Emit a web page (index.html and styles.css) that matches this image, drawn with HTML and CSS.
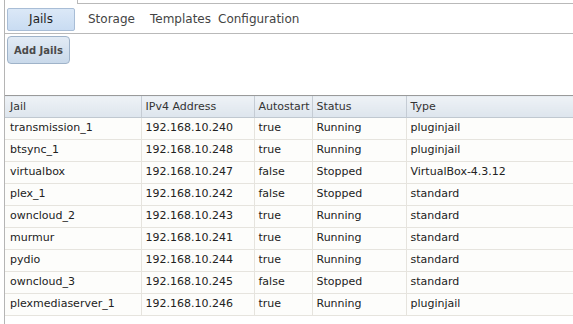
FILE: index.html
```html
<!DOCTYPE html>
<html lang="en">
<head>
    <meta charset="UTF-8">
    <title>Jails</title>
    <link rel="stylesheet" href="styles.css">
</head>
<body>
    <div class="panel">
        <div class="tabbar">
            <button class="tab active">Jails</button>
            <span class="tab tab-storage">Storage</span>
            <span class="tab tab-templates">Templates</span>
            <span class="tab">Configuration</span>
        </div>
        <div class="toolbar">
            <button class="add-button">Add Jails</button>
        </div>
        <table class="grid">
            <thead>
                <tr>
                    <th class="col-jail">Jail</th>
                    <th class="col-ip">IPv4 Address</th>
                    <th class="col-auto">Autostart</th>
                    <th class="col-status">Status</th>
                    <th class="col-type">Type</th>
                </tr>
            </thead>
            <tbody>
                <tr><td>transmission_1</td><td>192.168.10.240</td><td>true</td><td>Running</td><td>pluginjail</td></tr>
                <tr><td>btsync_1</td><td>192.168.10.248</td><td>true</td><td>Running</td><td>pluginjail</td></tr>
                <tr><td>virtualbox</td><td>192.168.10.247</td><td>false</td><td>Stopped</td><td>VirtualBox-4.3.12</td></tr>
                <tr><td>plex_1</td><td>192.168.10.242</td><td>false</td><td>Stopped</td><td>standard</td></tr>
                <tr><td>owncloud_2</td><td>192.168.10.243</td><td>true</td><td>Running</td><td>standard</td></tr>
                <tr><td>murmur</td><td>192.168.10.241</td><td>true</td><td>Running</td><td>standard</td></tr>
                <tr><td>pydio</td><td>192.168.10.244</td><td>true</td><td>Running</td><td>standard</td></tr>
                <tr><td>owncloud_3</td><td>192.168.10.245</td><td>false</td><td>Stopped</td><td>standard</td></tr>
                <tr><td>plexmediaserver_1</td><td>192.168.10.246</td><td>true</td><td>Running</td><td>pluginjail</td></tr>
            </tbody>
        </table>
    </div>
</body>
</html>
```

FILE: styles.css
```css
body {
    margin: 0;
    background-color: #fff;
    font-family: "DejaVu Sans", Verdana, sans-serif;
    font-size: 11px;
    color: #222;
}
.panel {
    margin-left: 4px;
    height: 324px;
    border-left: 1px solid #b5b5b5;
}
.tabbar {
    position: relative;
    display: flex;
    align-items: center;
    box-sizing: border-box;
    height: 34px;
    padding: 5px 0 0 2px;
    border-bottom: 1px solid #b9b9b9;
}
.tabbar::before {
    content: "";
    position: absolute;
    left: 72px;
    right: 0;
    top: 0;
    height: 3px;
    border-left: 1px solid #b9b9b9;
    border-bottom: 1px solid #b9b9b9;
}
.tab {
    font-family: inherit;
    font-size: 12px;
    color: #444;
}
.tab-storage {
    width: 62px;
}
.tab-templates {
    width: 68px;
}
.tab.active {
    box-sizing: border-box;
    width: 68px;
    height: 23px;
    margin: 0 13px 0 0;
    padding: 0;
    color: #1e1e1e;
    background: linear-gradient(#dbe8f7, #c9dcf2);
    border: 1px solid #a8bdd6;
    border-radius: 2px;
}
.toolbar {
    height: 59px;
    padding: 2px 0 0 2px;
}
.add-button {
    width: 63px;
    height: 28px;
    padding: 0;
    font-family: inherit;
    font-size: 10px;
    font-weight: bold;
    color: #4a4a4a;
    background: linear-gradient(#e2ebf5, #c9d9ea);
    border: 1px solid #9fb3c9;
    border-radius: 4px;
}
.grid {
    width: 568px;
    border-collapse: collapse;
    table-layout: fixed;
}
.grid th,
.grid td {
    box-sizing: border-box;
    height: 22px;
    padding: 0 0 1px 4px;
    text-align: left;
    white-space: nowrap;
    overflow: hidden;
}
.grid th {
    font-weight: normal;
    color: #333;
    background: linear-gradient(#eef2f6, #dde5ed);
    border-top: 1px solid #9a9a9a;
    border-bottom: 1px solid #c0c8d0;
    border-left: 1px solid #c5ccd4;
}
.grid td {
    padding-bottom: 2px;
    color: #222;
    background-color: #fdfdfb;
    border-bottom: 1px solid #e6e4de;
    border-left: 1px solid #e6e4de;
}
.grid th:first-child,
.grid td:first-child {
    padding-left: 5px;
    border-left: none;
}
.col-jail { width: 136px; }
.col-ip { width: 113px; }
.col-auto { width: 58px; }
.col-status { width: 94px; }
```
